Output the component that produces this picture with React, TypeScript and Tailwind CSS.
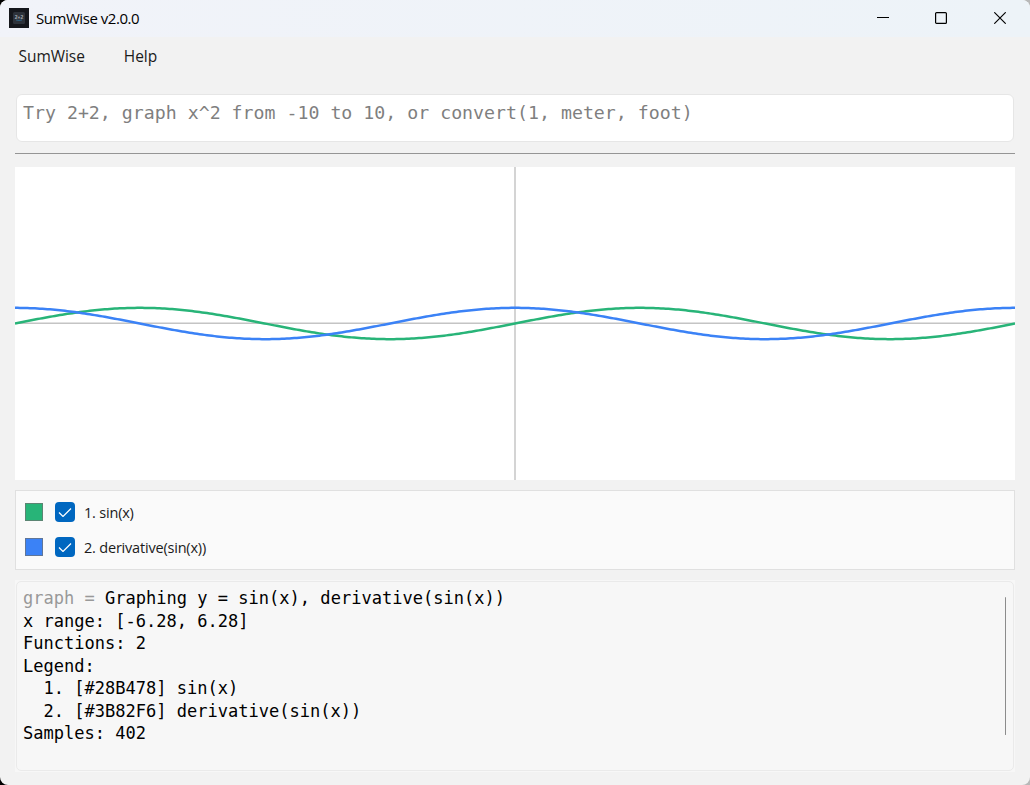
import { useState } from "react";

interface Fn {
  label: string;
  color: string;
  f: (x: number) => number;
}

const FUNCTIONS: Fn[] = [
  { label: "sin(x)", color: "#28B478", f: Math.sin },
  { label: "derivative(sin(x))", color: "#3B82F6", f: Math.cos },
];

const GRAPH_W = 1000;
const GRAPH_H = 313;
const SAMPLES = 402;
const X_RANGE = 6.28;
const Y_RANGE = 10;

const toPath = (f: Fn["f"]) => {
  const points: string[] = [];
  for (let i = 0; i < SAMPLES; i++) {
    const t = i / (SAMPLES - 1);
    const y = f(-X_RANGE + t * X_RANGE * 2);
    const py = GRAPH_H / 2 - (y / Y_RANGE) * (GRAPH_H / 2);
    points.push(`${(t * GRAPH_W).toFixed(2)},${py.toFixed(2)}`);
  }
  return `M${points.join("L")}`;
};

const AppIcon = () => (
  <svg width="20" height="20" viewBox="0 0 20 20" className="shrink-0">
    <rect width="20" height="20" fill="#15171c" />
    <rect x="4" y="4" width="12" height="12" rx="1.5" fill="#2d323a" />
    <text x="10" y="10.8" textAnchor="middle" fontSize="5" fontWeight="700" fontFamily="Liberation Sans, sans-serif" fill="#a4aab2">
      2+2
    </text>
    <path d="M7 12q3 1 6 0" stroke="#2f6f96" strokeWidth="0.8" fill="none" />
  </svg>
);

const TitleBar = () => (
  <header className="flex h-[37px] items-center bg-linear-to-r from-[#f1f3f9] to-[#edf3f8] pb-px pl-[9px]">
    <AppIcon />
    <span className="ml-[7px] grow text-[15px] tracking-[-0.45px] text-black">SumWise v2.0.0</span>
    <div className="flex">
      <button className="flex h-9 w-[58px] items-center justify-center" aria-label="Minimize">
        <svg width="12" height="12" viewBox="0 0 12 12" stroke="#000" fill="none">
          <path d="M0 5.5h12" />
        </svg>
      </button>
      <button className="flex h-9 w-[58px] items-center justify-center" aria-label="Maximize">
        <svg width="12" height="12" viewBox="0 0 12 12" stroke="#000" fill="none">
          <rect x="0.6" y="0.6" width="10.8" height="10.8" rx="1" strokeWidth="1.2" />
        </svg>
      </button>
      <button className="flex h-9 w-[60px] items-center justify-center" aria-label="Close">
        <svg width="12" height="12" viewBox="0 0 12 12" stroke="#000" fill="none">
          <path d="M0.3 0.3l11.4 11.4M11.7 0.3L0.3 11.7" strokeWidth="1.15" />
        </svg>
      </button>
    </div>
  </header>
);

const Graph = ({ visible }: { visible: boolean[] }) => (
  <svg width={GRAPH_W} height={GRAPH_H} viewBox={`0 0 ${GRAPH_W} ${GRAPH_H}`} className="mt-[13px] block shrink-0 bg-white">
    <path d={`M0 156.25h${GRAPH_W}`} stroke="#c4c4c4" strokeWidth="1.5" />
    <path d={`M500 0v${GRAPH_H}`} stroke="#d4d4d4" strokeWidth="2" />
    {FUNCTIONS.map((fn, i) =>
      visible[i] ? <path key={fn.label} d={toPath(fn.f)} stroke={fn.color} strokeWidth="2.5" fill="none" /> : null
    )}
  </svg>
);

const Legend = ({ visible, onToggle }: { visible: boolean[]; onToggle: (i: number) => void }) => (
  <div className="mt-2.5 flex h-20 shrink-0 flex-col gap-[15px] border border-[#e0e0e0] bg-[#fafafa] pt-[11px] pl-[9px]">
    {FUNCTIONS.map((fn, i) => (
      <div key={fn.label} className="flex h-5 items-center">
        <span className="size-[18px] border border-[#707070]/70 bg-clip-border" style={{ backgroundColor: fn.color }} />
        <button
          onClick={() => onToggle(i)}
          className="ml-3 flex size-5 items-center justify-center rounded-[4px] bg-[#0067c0]"
          aria-label={`Toggle ${fn.label}`}
        >
          {visible[i] && (
            <svg width="14" height="10" viewBox="0 0 14 10" fill="none" stroke="#fff" strokeWidth="1.2">
              <path d="M1 5.5l4 4l8-8" />
            </svg>
          )}
        </button>
        <span className="ml-[9px] pt-0.5 text-[14.5px] tracking-[-0.2px] text-[#1b1b1b]">
          {i + 1}. {fn.label}
        </span>
      </div>
    ))}
  </div>
);

const Output = () => {
  const lines = [
    `x range: [-${X_RANGE}, ${X_RANGE}]`,
    `Functions: ${FUNCTIONS.length}`,
    "Legend:",
    ...FUNCTIONS.map((fn, i) => `  ${i + 1}. [${fn.color}] ${fn.label}`),
    `Samples: ${SAMPLES}`,
  ];

  return (
    <div className="mt-2.5 flex h-48 shrink-0 bg-[#f7f7f7] p-px">
      <div className="flex grow justify-between rounded-[5px] border border-[#eaeaea] bg-[#f7f7f7] pr-[7px] pl-[6px]">
        <div className="pt-[5px] font-['DejaVu_Sans_Mono',monospace] text-[17.05px] leading-[22.5px] whitespace-pre text-black">
          <div className="flex">
            <span className="text-[#999]">{"graph = "}</span>
            <span>Graphing y = {FUNCTIONS.map((fn) => fn.label).join(", ")}</span>
          </div>
          {lines.map((line) => (
            <div key={line}>{line}</div>
          ))}
        </div>
        <div className="mt-[15px] h-[138px] w-px rounded-full bg-[#8c8c8c]" />
      </div>
    </div>
  );
};

export default function App() {
  const [visible, setVisible] = useState([true, true]);

  const toggle = (i: number) => setVisible((prev) => prev.map((v, j) => (j === i ? !v : v)));

  return (
    <div className="h-[785px] w-[1030px] bg-linear-to-r from-black to-[#b8b8b8]">
      <div className="flex h-full flex-col overflow-hidden rounded-[8px] bg-[#f2f2f2] font-['Open_Sans',sans-serif]">
        <TitleBar />
        <nav className="flex h-10 items-center gap-[39px] pl-[18.5px] text-[15.5px] tracking-[-0.05px] text-[#1b1b1b]">
          <span>SumWise</span>
          <span>Help</span>
        </nav>
        <main className="flex flex-col px-[15px] pt-[17px]">
          <input
            className="mx-px h-12 shrink-0 rounded-[6px] border border-[#e6e6e6] bg-white px-[6px] pb-[12px] font-['DejaVu_Sans_Mono',monospace] text-[18.24px] text-black outline-none placeholder:text-[#7f7f7f]"
            placeholder="Try 2+2, graph x^2 from -10 to 10, or convert(1, meter, foot)"
          />
          <hr className="mt-[11px] border-[#959595]" />
          <Graph visible={visible} />
          <Legend visible={visible} onToggle={toggle} />
          <Output />
        </main>
      </div>
    </div>
  );
}
